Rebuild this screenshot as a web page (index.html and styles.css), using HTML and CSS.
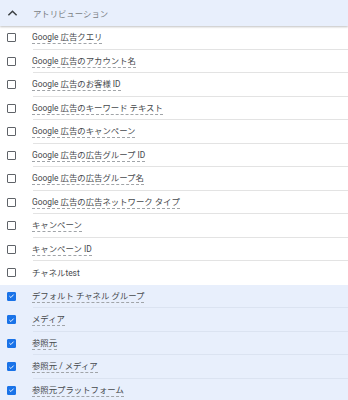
FILE: index.html
```html
<!DOCTYPE html>
<html lang="ja">
<head>
    <meta charset="UTF-8">
    <title>アトリビューション</title>
    <link rel="stylesheet" href="styles.css">
</head>
<body>
    <!-- group header, collapsible -->
    <div class="group-header">
        <svg class="chevron" viewBox="0 0 12 8" width="11" height="8">
            <path d="M1.5 6.5 L6 2 L10.5 6.5" fill="none" stroke="#3c4043" stroke-width="1.6" />
        </svg>
        <span class="group-title">アトリビューション</span>
    </div>

    <div class="field-list">
        <div class="field-row"><span class="box"></span><span class="label dashed">Google 広告クエリ</span></div>
        <div class="field-row"><span class="box"></span><span class="label dashed">Google 広告のアカウント名</span></div>
        <div class="field-row"><span class="box"></span><span class="label dashed">Google 広告のお客様 ID</span></div>
        <div class="field-row"><span class="box"></span><span class="label dashed">Google 広告のキーワード テキスト</span></div>
        <div class="field-row"><span class="box"></span><span class="label dashed">Google 広告のキャンペーン</span></div>
        <div class="field-row"><span class="box"></span><span class="label dashed">Google 広告の広告グループ ID</span></div>
        <div class="field-row"><span class="box"></span><span class="label dashed">Google 広告の広告グループ名</span></div>
        <div class="field-row"><span class="box"></span><span class="label dashed">Google 広告の広告ネットワーク タイプ</span></div>
        <div class="field-row"><span class="box"></span><span class="label dashed">キャンペーン</span></div>
        <div class="field-row"><span class="box"></span><span class="label dashed">キャンペーン ID</span></div>
        <div class="field-row last-plain"><span class="box"></span><span class="label">チャネルtest</span></div>

        <!-- selected fields -->
        <div class="field-row checked"><span class="box"><svg viewBox="0 0 12 12" width="10" height="10"><path d="M2.4 6.2 L5 8.6 L9.6 3.6" fill="none" stroke="#fff" stroke-width="1.6" /></svg></span><span class="label dashed">デフォルト チャネル グループ</span></div>
        <div class="field-row checked"><span class="box"><svg viewBox="0 0 12 12" width="10" height="10"><path d="M2.4 6.2 L5 8.6 L9.6 3.6" fill="none" stroke="#fff" stroke-width="1.6" /></svg></span><span class="label dashed">メディア</span></div>
        <div class="field-row checked"><span class="box"><svg viewBox="0 0 12 12" width="10" height="10"><path d="M2.4 6.2 L5 8.6 L9.6 3.6" fill="none" stroke="#fff" stroke-width="1.6" /></svg></span><span class="label dashed">参照元</span></div>
        <div class="field-row checked"><span class="box"><svg viewBox="0 0 12 12" width="10" height="10"><path d="M2.4 6.2 L5 8.6 L9.6 3.6" fill="none" stroke="#fff" stroke-width="1.6" /></svg></span><span class="label dashed">参照元 / メディア</span></div>
        <div class="field-row checked"><span class="box"><svg viewBox="0 0 12 12" width="10" height="10"><path d="M2.4 6.2 L5 8.6 L9.6 3.6" fill="none" stroke="#fff" stroke-width="1.6" /></svg></span><span class="label dashed">参照元プラットフォーム</span></div>
    </div>
</body>
</html>
```

FILE: styles.css
```css
body, html {
    margin: 0;
    background: #fff;
    font-family: Roboto, "Noto Sans CJK JP", sans-serif;
    overflow: hidden;
}

/* header of the group */
.group-header {
    height: 26px;
    display: flex;
    align-items: center;
    background: #e8effc;
    box-shadow: 0 1px 2px rgba(0,0,0,.25);
    position: relative;
    z-index: 1;
}
.chevron {
    margin-left: 7px;
    margin-right: 15px;
}
.group-title {
    font-size: 8.4px;
    color: #7a7e83;
}

/* one row per field */
.field-row {
    height: 23.5px;
    display: flex;
    align-items: center;
    position: relative;
}
.field-row::after {
    content: "";
    position: absolute;
    left: 33px;
    right: 0;
    bottom: 0;
    border-bottom: 1px solid #e3e3e3;
}
.field-row.last-plain::after,
.field-row.checked:last-child::after {
    display: none;
}
.field-row.checked {
    background: #e8effc;
}
.field-row.checked::after {
    border-bottom-color: #dbe3f1;
}

.box {
    width: 7px;
    height: 7px;
    margin-left: 7px;
    margin-right: 16px;
    border: 1.5px solid #5f6368;
    border-radius: 1px;
    display: flex;
    align-items: center;
    justify-content: center;
    flex-shrink: 0;
}
.checked .box {
    background: #1a73e8;
    border-color: #1a73e8;
}

.label {
    font-size: 8.4px;
    color: #46494d;
    line-height: 12px;
}
.label.dashed {
    border-bottom: 1px dashed #a0a4a8;
}
```
